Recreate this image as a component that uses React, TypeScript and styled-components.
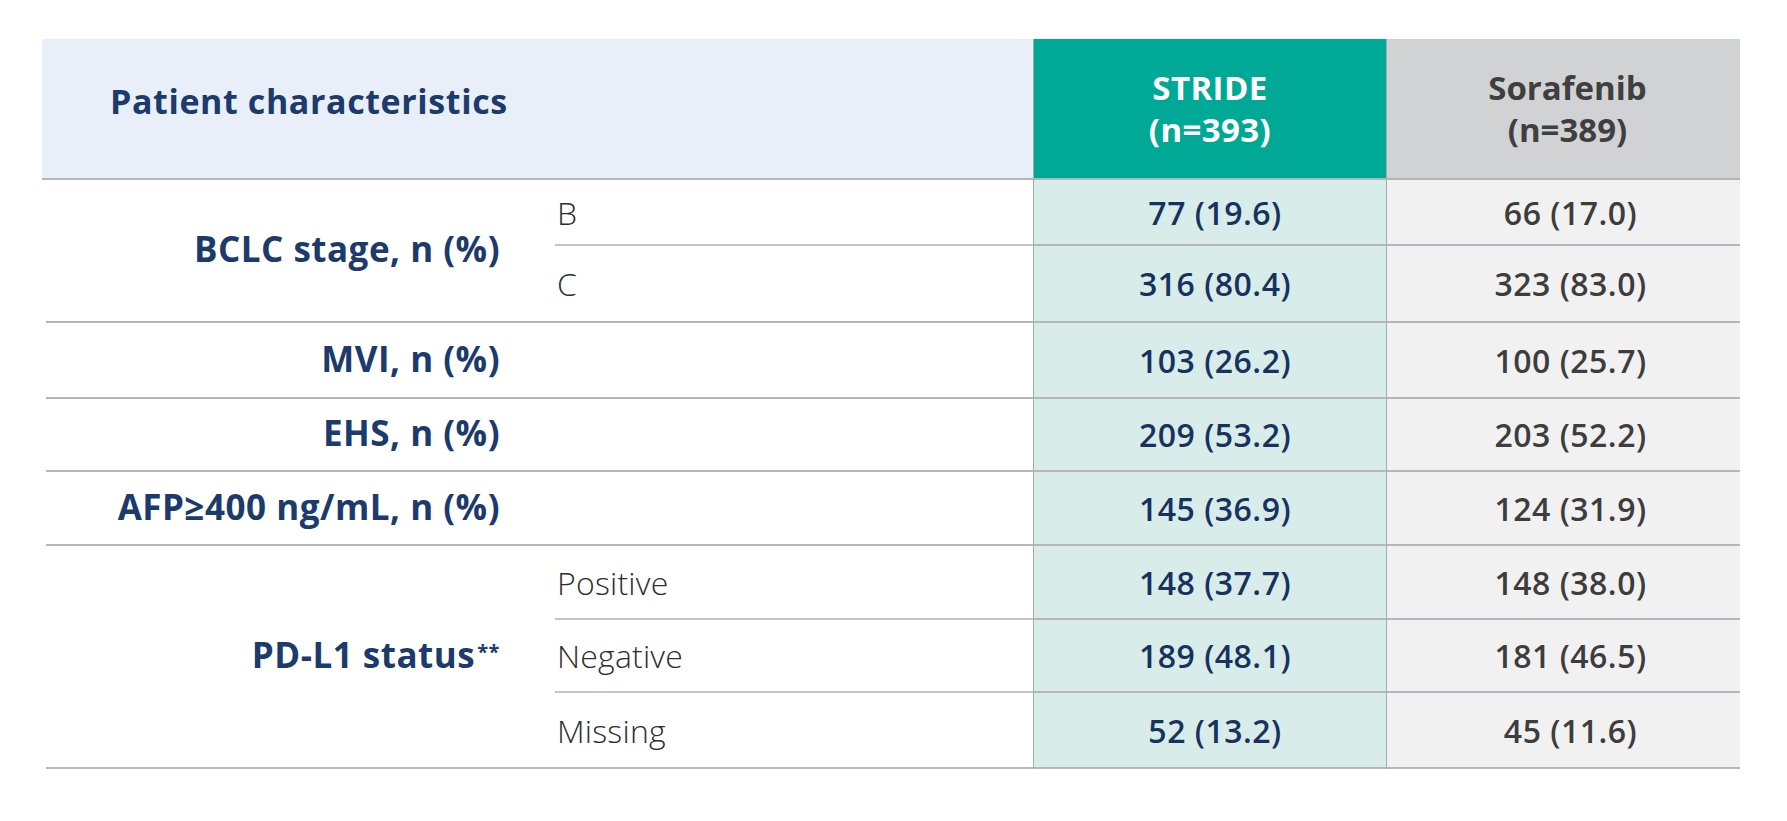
import React from 'react';
import styled, { createGlobalStyle } from 'styled-components';

const GlobalStyle = createGlobalStyle`
  html, body {
    margin: 0;
    padding: 0;
    background: #fff;
  }
  body {
    font-family: "Open Sans", "Noto Sans", "DejaVu Sans", sans-serif;
  }
`;

const Page = styled.div`
  width: 1787px;
  height: 821px;
  box-sizing: border-box;
  padding: 39px 0 0 42px;
`;

const Table = styled.div`
  display: grid;
  grid-template-columns: 513px 478px 354px 353px;
  grid-template-rows: 141px 66px 77px 76px 73px 74px 74px 73px 76px;
`;

const TitleHead = styled.div`
  grid-column: span 2;
  display: flex;
  align-items: center;
  padding: 0 0 16px 68px;
  background: #e8eff9;
  border-bottom: 2px solid #b4b6b9;
  color: #1c3a6b;
  font-size: 34px;
  font-weight: 700;
  letter-spacing: 0.6px;
`;

const ArmHead = styled.div<{ $arm: 'stride' | 'sora' }>`
  display: flex;
  flex-direction: column;
  align-items: center;
  justify-content: center;
  padding-left: ${(p) => (p.$arm === 'stride' ? '0' : '8px')};
  background: ${(p) => (p.$arm === 'stride' ? '#00a896' : '#d1d2d4')};
  color: ${(p) => (p.$arm === 'stride' ? '#ffffff' : '#3f3f3f')};
  border-bottom: 2px solid #b4b6b9;
  border-left: ${(p) => (p.$arm === 'stride' ? '1px solid #9fb0ad' : 'none')};
  border-right: ${(p) => (p.$arm === 'stride' ? '1px solid #9fb0ad' : 'none')};
  font-size: 33px;
  font-weight: 700;
  line-height: 42px;
  letter-spacing: ${(p) => (p.$arm === 'stride' ? '0.4px' : '0')};
`;

const Label = styled.div<{ $span?: number }>`
  grid-row: span ${(p) => p.$span ?? 1};
  display: flex;
  align-items: center;
  justify-content: flex-end;
  padding: 0 55px 4px 0;
  margin-left: 4px;
  border-bottom: 2px solid #b4b6b9;
  color: #1c3a6b;
  font-size: 35px;
  font-weight: 700;
  letter-spacing: 0.5px;
  white-space: nowrap;
`;

const Star = styled.sup`
  font-size: 20px;
  line-height: 0;
  margin-left: 2px;
  position: relative;
  top: -3px;
`;

const Sub = styled.div<{ $last: boolean }>`
  display: flex;
  align-items: center;
  padding-left: 2px;
  border-bottom: 2px solid ${(p) => (p.$last ? '#b4b6b9' : '#c3c4c6')};
  color: #2e2e2e;
  font-size: 32px;
  font-weight: 300;
  letter-spacing: 0.2px;
`;

const Value = styled.div<{ $arm: 'stride' | 'sora' }>`
  display: flex;
  align-items: center;
  justify-content: center;
  padding-left: ${(p) => (p.$arm === 'stride' ? '10px' : '14px')};
  background: ${(p) => (p.$arm === 'stride' ? '#d8edea' : '#f1f1f1')};
  color: ${(p) => (p.$arm === 'stride' ? '#17325e' : '#3d3d3d')};
  border-bottom: 2px solid #b4b6b9;
  border-left: ${(p) => (p.$arm === 'stride' ? '1px solid #9fb0ad' : 'none')};
  border-right: ${(p) => (p.$arm === 'stride' ? '1px solid #9fb0ad' : 'none')};
  font-size: 32px;
  font-weight: 600;
  letter-spacing: 0.5px;
`;

type Group = {
  label: string;
  stars?: boolean;
  rows: { sub: string; stride: string; sora: string }[];
};

const groups: Group[] = [
  {
    label: 'BCLC stage, n (%)',
    rows: [
      { sub: 'B', stride: '77 (19.6)', sora: '66 (17.0)' },
      { sub: 'C', stride: '316 (80.4)', sora: '323 (83.0)' },
    ],
  },
  { label: 'MVI, n (%)', rows: [{ sub: '', stride: '103 (26.2)', sora: '100 (25.7)' }] },
  { label: 'EHS, n (%)', rows: [{ sub: '', stride: '209 (53.2)', sora: '203 (52.2)' }] },
  { label: 'AFP≥400 ng/mL, n (%)', rows: [{ sub: '', stride: '145 (36.9)', sora: '124 (31.9)' }] },
  {
    label: 'PD-L1 status',
    stars: true,
    rows: [
      { sub: 'Positive', stride: '148 (37.7)', sora: '148 (38.0)' },
      { sub: 'Negative', stride: '189 (48.1)', sora: '181 (46.5)' },
      { sub: 'Missing', stride: '52 (13.2)', sora: '45 (11.6)' },
    ],
  },
];

const App: React.FC = () => {
  return (
    <Page>
      <GlobalStyle />
      <Table>
        <TitleHead>Patient characteristics</TitleHead>
        <ArmHead $arm="stride">
          <span>STRIDE</span>
          <span>(n=393)</span>
        </ArmHead>
        <ArmHead $arm="sora">
          <span>Sorafenib</span>
          <span>(n=389)</span>
        </ArmHead>
        {groups.map((g) => (
          <React.Fragment key={g.label}>
            <Label $span={g.rows.length}>
              {g.label}
              {g.stars && <Star>**</Star>}
            </Label>
            {g.rows.map((r, i) => (
              <React.Fragment key={g.label + i}>
                <Sub $last={i === g.rows.length - 1}>{r.sub}</Sub>
                <Value $arm="stride">{r.stride}</Value>
                <Value $arm="sora">{r.sora}</Value>
              </React.Fragment>
            ))}
          </React.Fragment>
        ))}
      </Table>
    </Page>
  );
};

export default App;
